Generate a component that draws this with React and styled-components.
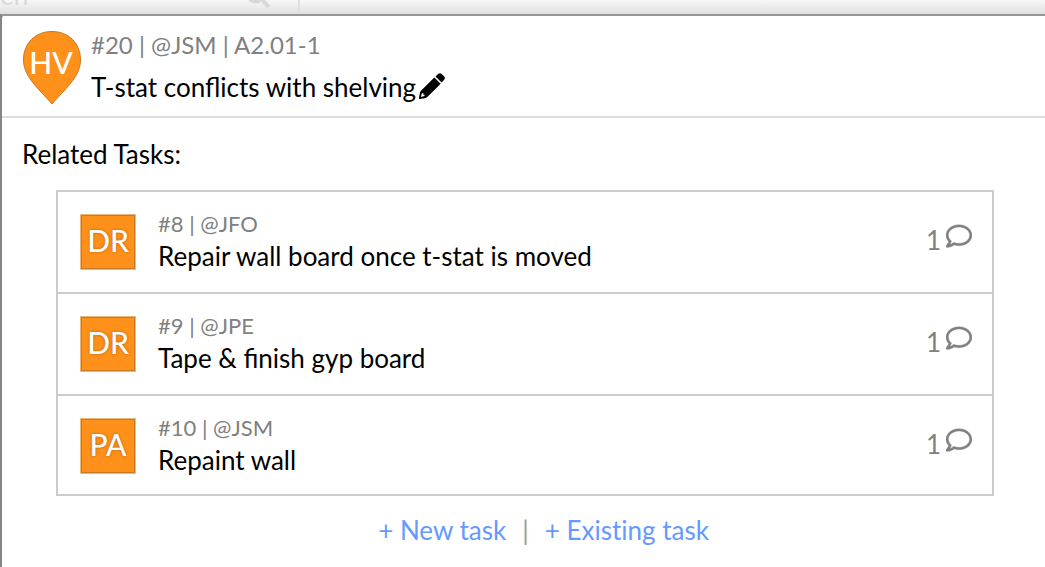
import React from "react";
import styled, { createGlobalStyle } from "styled-components";
import { FaRegComment, FaSearch } from "react-icons/fa";

const GlobalStyle = createGlobalStyle`
  * { box-sizing: border-box; }
  body {
    margin: 0;
    font-family: Lato, "Open Sans", sans-serif;
    font-size: 26px;
    line-height: 32px;
    color: #000;
    background: #858585;
  }
`;

const Page = styled.div`
  display: flex;
  flex-direction: column;
  height: 100vh;
  overflow: hidden;
`;

const Toolbar = styled.div`
  display: flex;
  align-items: flex-end;
  flex: 0 0 14px;
  height: 14px;
  background: linear-gradient(#f8f8f8, #dfdfdf);
`;

const SearchArea = styled.div`
  display: flex;
  justify-content: space-between;
  align-items: flex-end;
  width: 300px;
  padding: 0 28px 6px 0;
  border-right: 2px solid #e0e0e0;
  color: #d9d9d9;
  line-height: 26px;
`;

const Dialog = styled.main`
  flex: 1 0 auto;
  border: 2px solid #858585;
  border-top-color: #979595;
  border-right: 0;
  border-bottom: 0;
  border-top-left-radius: 4px;
  background: #fff;
`;

const DialogHeader = styled.header`
  display: flex;
  gap: 9px;
  height: 102px;
  padding: 13px 20px 0;
  border-bottom: 2px solid #dddddd;
`;

const Pin = styled.svg`
  flex: none;
  width: 60px;
  height: 78px;
  text {
    font-size: 30px;
    font-weight: 500;
    fill: #fff;
    text-anchor: middle;
  }
`;

const HeaderText = styled.div`
  display: flex;
  flex-direction: column;
  gap: 10px;
`;

const Meta = styled.div`
  font-size: ${(p) => (p.$large ? 24 : 22)}px;
  line-height: 32px;
  color: #808080;
`;

const Title = styled.h1`
  display: flex;
  align-items: center;
  gap: 3px;
  margin: 0;
  font-size: 26px;
  font-weight: 400;
`;

const IconButton = styled.button`
  display: flex;
  padding: 0 0 2px;
  border: 0;
  background: none;
  color: #000;
  cursor: pointer;
`;

const Section = styled.section`
  padding: 20px 20px 0;
`;

const SectionTitle = styled.h2`
  margin: 0;
  font-size: 26px;
  font-weight: 400;
`;

const TaskList = styled.ul`
  margin: 20px 31px 0 34px;
  padding: 0;
  list-style: none;
  border: 2px solid #cccccc;
`;

const TaskRow = styled.li`
  display: flex;
  align-items: center;
  height: 100px;
  padding: 0 20px 0 22px;
  & + & {
    height: 102px;
    border-top: 2px solid #cccccc;
  }
  &:last-child {
    height: 100px;
    padding-top: 2px;
  }
`;

const Badge = styled.div`
  display: flex;
  align-items: center;
  justify-content: center;
  width: 56px;
  height: 56px;
  margin-right: 22px;
  padding-bottom: 4px;
  border: 1px solid #e5b880;
  box-shadow: inset 0 0 0 1px #c97a20;
  background: #ff9019;
  color: #fff;
  font-size: 30px;
  font-weight: 500;
  text-shadow: 0 0 3px rgba(0, 0, 0, 0.3);
`;

const TaskText = styled.div`
  flex: 1;
  padding-bottom: 4px;
`;

const CommentCount = styled.button`
  display: flex;
  align-items: center;
  gap: 5px;
  padding: 0 0 4px;
  border: 0;
  background: none;
  color: #808080;
  font: inherit;
  cursor: pointer;
  svg {
    margin-bottom: 8px;
    stroke: currentColor;
    stroke-width: 6;
  }
`;

const Actions = styled.div`
  display: flex;
  justify-content: center;
  gap: 16px;
  margin: 18px 0 15px;
  padding-left: 40px;
  color: #999;
`;

const ActionLink = styled.a`
  color: #6699ff;
  text-decoration: none;
  font-variant-ligatures: none;
`;

const tasks = [
  { code: "DR", meta: "#8 | @JFO", title: "Repair wall board once t-stat is moved" },
  { code: "DR", meta: "#9 | @JPE", title: "Tape & finish gyp board" },
  { code: "PA", meta: "#10 | @JSM", title: "Repaint wall" },
];

function PencilIcon() {
  return (
    <svg width="26" height="26" viewBox="0 0 26 26" fill="currentColor" aria-hidden="true">
      <path d="M16.500 3.500L19 1.100Q21 -.5 22.800 1.100L25 3.300Q26.700 5 25 7L22.600 9.500Z" />
      <path
        fillRule="evenodd"
        d="M15.300 4.500L21.700 10.800L8.300 24Q7.600 24.700 6.700 24.900L1.300 26Q-.2 26.200 0 24.700L1 19.300Q1.200 18.500 1.800 17.900ZM2.700 20.400L2 23.900L5.600 23.100L5.300 21.600L4.500 21.900L4.200 20.100Z"
      />
    </svg>
  );
}

export default function App() {
  return (
    <>
      <GlobalStyle />
      <Page>
        <Toolbar>
          <SearchArea>
            <span>en</span>
            <FaSearch size={24} />
          </SearchArea>
        </Toolbar>
        <Dialog>
          <DialogHeader>
            <Pin viewBox="0 0 60 78" role="img" aria-label="HV">
              <path
                d="M30 2.500C13 2.500 1.500 14.500 1.500 31C1.500 48 18 61 30 75C42 61 58.500 48 58.500 31C58.500 14.500 47 2.500 30 2.500Z"
                fill="#ff9019"
                stroke="#c97a20"
              />
              <text x="29" y="45">HV</text>
            </Pin>
            <HeaderText>
              <Meta $large>#20 | @JSM | A2.01-1</Meta>
              <Title>
                T-stat conflicts with shelving
                <IconButton aria-label="Edit title">
                  <PencilIcon />
                </IconButton>
              </Title>
            </HeaderText>
          </DialogHeader>
          <Section>
            <SectionTitle>Related Tasks:</SectionTitle>
            <TaskList>
              {tasks.map((task) => (
                <TaskRow key={task.meta}>
                  <Badge>{task.code}</Badge>
                  <TaskText>
                    <Meta>{task.meta}</Meta>
                    <div>{task.title}</div>
                  </TaskText>
                  <CommentCount aria-label="1 comment">
                    1
                    <FaRegComment size={26} />
                  </CommentCount>
                </TaskRow>
              ))}
            </TaskList>
            <Actions>
              <ActionLink href="#new">+ New task</ActionLink>
              <span>|</span>
              <ActionLink href="#existing">+ Existing task</ActionLink>
            </Actions>
            <SectionTitle>Checklist</SectionTitle>
          </Section>
        </Dialog>
      </Page>
    </>
  );
}
